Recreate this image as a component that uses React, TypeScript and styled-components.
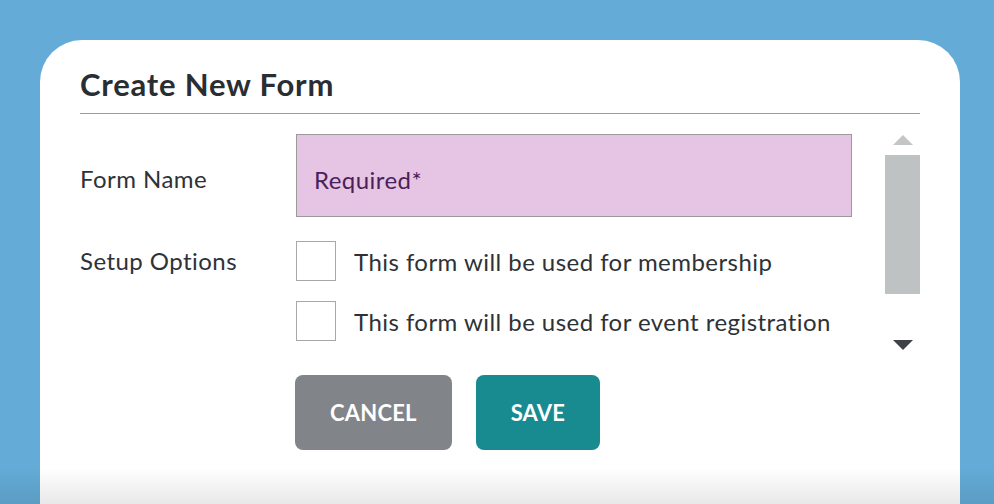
import { FC } from 'react';
import styled, { createGlobalStyle } from 'styled-components';

const Global = createGlobalStyle`
  html, body {
    margin: 0;
    padding: 0;
    height: 100%;
    overflow: hidden;
    background: #64acd7;
  }
  body {
    font-family: Lato, "Liberation Sans", sans-serif;
    color: #2e3236;
  }
`;

const Page = styled.div`
  display: flex;
  padding: 40px 34px 0 40px;
  height: 504px;
  box-sizing: border-box;
`;

const Card = styled.div`
  width: 920px;
  height: 520px;
  background: #fff;
  border-radius: 42px 42px 0 0;
  padding: 26px 40px 0 40px;
  box-sizing: border-box;
`;

const Header = styled.div`
  border-bottom: 1px solid #9c9c9c;
  padding-bottom: 10px;
`;

const Title = styled.h1`
  margin: 0;
  font-size: 31px;
  line-height: 37px;
  font-weight: 700;
  letter-spacing: 0.8px;
  color: #2a2e32;
`;

const Body = styled.div`
  display: flex;
  padding-top: 20px;
`;

const Form = styled.div`
  width: 772px;
  display: flex;
  flex-direction: column;
`;

const Row = styled.div<{ $gap?: number }>`
  display: grid;
  grid-template-columns: 216px 1fr;
  margin-top: ${({ $gap }) => $gap ?? 0}px;
`;

const Label = styled.div<{ $center?: boolean }>`
  font-size: 24px;
  letter-spacing: 0.45px;
  line-height: 40px;
  align-self: ${({ $center }) => ($center ? 'center' : 'start')};
  padding-top: ${({ $center }) => ($center ? 7 : 0)}px;
`;

const Input = styled.div`
  height: 83px;
  box-sizing: border-box;
  background: #e6c4e3;
  border: 1px solid #9a9a9a;
  display: flex;
  align-items: center;
  padding: 7px 17px 0;
  font-size: 24px;
  letter-spacing: 0.45px;
  color: #4b1f5c;
`;

const Options = styled.div`
  display: flex;
  flex-direction: column;
  gap: 20px;
`;

const Option = styled.label`
  display: flex;
  align-items: center;
  gap: 18px;
  font-size: 24px;
  letter-spacing: 0.45px;
`;

const Box = styled.span`
  width: 40px;
  height: 40px;
  box-sizing: border-box;
  border: 1px solid #a8a8a8;
  background: #fff;
`;

const Buttons = styled.div`
  display: flex;
  gap: 24px;
  margin-left: -1px;
`;

const Button = styled.button<{ $tone: 'grey' | 'teal' }>`
  height: 75px;
  padding: 0 35px;
  border: none;
  border-radius: 8px;
  background: ${({ $tone }) => ($tone === 'grey' ? '#818589' : '#178b90')};
  color: #fff;
  font-family: Lato, "Liberation Sans", sans-serif;
  font-size: 22px;
  font-weight: 700;
  letter-spacing: 0.2px;
`;

const Scrollbar = styled.div`
  width: 35px;
  margin-left: 33px;
  display: flex;
  flex-direction: column;
  align-items: center;
`;

const Arrow = styled.div<{ $down?: boolean }>`
  width: 0;
  height: 0;
  border-left: 10px solid transparent;
  border-right: 10px solid transparent;
  ${({ $down }) =>
    $down
      ? 'border-top: 10px solid #3f4347; margin-top: 46px;'
      : 'border-bottom: 10px solid #c3c5c6; margin-top: 1px; margin-bottom: 10px;'}
`;

const Thumb = styled.div`
  width: 35px;
  height: 139px;
  background: #bfc2c3;
`;

const Fade = styled.div`
  position: fixed;
  left: 0;
  right: 0;
  bottom: 0;
  height: 36px;
  background: linear-gradient(to bottom, rgba(0, 0, 0, 0), rgba(0, 0, 0, 0.09));
  pointer-events: none;
`;

const App: FC = () => (
  <>
    <Global />
    <Page>
      <Card>
        <Header>
          <Title>Create New Form</Title>
        </Header>
        <Body>
          <Form>
            <Row>
              <Label $center>Form Name</Label>
              <Input>Required*</Input>
            </Row>
            <Row $gap={24}>
              <Label>Setup Options</Label>
              <Options>
                <Option>
                  <Box />
                  This form will be used for membership
                </Option>
                <Option>
                  <Box />
                  This form will be used for event registration
                </Option>
              </Options>
            </Row>
            <Row $gap={34}>
              <span />
              <Buttons>
                <Button $tone="grey">CANCEL</Button>
                <Button $tone="teal">SAVE</Button>
              </Buttons>
            </Row>
          </Form>
          <Scrollbar>
            <Arrow />
            <Thumb />
            <Arrow $down />
          </Scrollbar>
        </Body>
      </Card>
    </Page>
    <Fade />
  </>
);

export default App;
